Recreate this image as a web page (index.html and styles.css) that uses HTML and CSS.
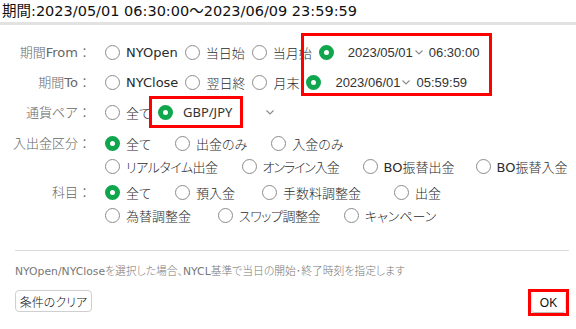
FILE: index.html
```html
<!DOCTYPE html>
<html lang="ja">

<head>
    <meta charset="UTF-8">
    <meta name="viewport" content="width=device-width, initial-scale=1.0">
    <title>検索条件</title>
    <link rel="stylesheet" href="styles.css">
</head>

<body>
    <div class="header">期間:2023/05/01 06:30:00～2023/06/09 23:59:59</div>

    <div class="form">
        <!-- 期間 -->
        <div class="row">
            <div class="label">期間From：</div>
            <div class="opts">
                <div class="line">
                    <span class="opt"><span class="radio"></span>NYOpen</span>
                    <span class="opt"><span class="radio"></span>当日始</span>
                    <span class="opt"><span class="radio"></span>当月始</span>
                    <span class="opt">
                        <span class="radio on wide"></span>
                        <span class="date">2023/05/01<svg class="chev" width="8" height="5" viewBox="0 0 8 5"><path d="M0.5 0.5 L4 4 L7.5 0.5" fill="none" stroke="#8a8a8a" stroke-width="1.1"/></svg></span>
                        <span class="time">06:30:00</span>
                    </span>
                </div>
            </div>
        </div>

        <div class="row">
            <div class="label">期間To：</div>
            <div class="opts">
                <div class="line">
                    <span class="opt"><span class="radio"></span>NYClose</span>
                    <span class="opt"><span class="radio"></span>翌日終</span>
                    <span class="opt"><span class="radio"></span>月末</span>
                    <span class="opt">
                        <span class="radio on wide"></span>
                        <span class="date">2023/06/01<svg class="chev" width="8" height="5" viewBox="0 0 8 5"><path d="M0.5 0.5 L4 4 L7.5 0.5" fill="none" stroke="#8a8a8a" stroke-width="1.1"/></svg></span>
                        <span class="time">05:59:59</span>
                    </span>
                </div>
            </div>
        </div>

        <!-- 通貨ペア -->
        <div class="row">
            <div class="label">通貨ペア：</div>
            <div class="opts">
                <div class="line">
                    <span class="opt"><span class="radio"></span>全て</span>
                    <span class="opt">
                        <span class="radio on pair"></span>
                        <span class="select">GBP/JPY<svg class="chev" width="8" height="5" viewBox="0 0 8 5"><path d="M0.5 0.5 L4 4 L7.5 0.5" fill="none" stroke="#8a8a8a" stroke-width="1.1"/></svg></span>
                    </span>
                </div>
            </div>
        </div>

        <!-- 入出金区分 -->
        <div class="row multi first">
            <div class="label">入出金区分：</div>
            <div class="opts">
                <div class="line">
                    <span class="opt"><span class="radio on"></span>全て</span>
                    <span class="opt"><span class="radio"></span>出金のみ</span>
                    <span class="opt"><span class="radio"></span>入金のみ</span>
                </div>
                <div class="line">
                    <span class="opt tight"><span class="radio"></span>リアルタイム出金</span>
                    <span class="opt tighter"><span class="radio"></span>オンライン入金</span>
                    <span class="opt narrow"><span class="radio"></span>BO振替出金</span>
                    <span class="opt"><span class="radio"></span>BO振替入金</span>
                </div>
            </div>
        </div>

        <!-- 科目 -->
        <div class="row multi">
            <div class="label">科目：</div>
            <div class="opts">
                <div class="line">
                    <span class="opt"><span class="radio on"></span>全て</span>
                    <span class="opt spaced"><span class="radio"></span>預入金</span>
                    <span class="opt spaced-more"><span class="radio"></span>手数料調整金</span>
                    <span class="opt"><span class="radio"></span>出金</span>
                </div>
                <div class="line">
                    <span class="opt spaced"><span class="radio"></span>為替調整金</span>
                    <span class="opt tight"><span class="radio"></span>スワップ調整金</span>
                    <span class="opt"><span class="radio"></span>キャンペーン</span>
                </div>
            </div>
        </div>

        <!-- 注目枠 -->
        <div class="mark mark-date"></div>
        <div class="mark mark-pair"></div>
    </div>

    <div class="footer">
        <div class="note">NYOpen/NYCloseを選択した場合、NYCL基準で当日の開始･終了時刻を指定します</div>
        <div class="actions">
            <button class="btn btn-clear">条件のクリア</button>
            <span class="mark-ok"><button class="btn btn-ok">OK</button></span>
        </div>
    </div>
</body>

</html>
```

FILE: styles.css
```css
body {
    margin: 0;
    font-family: 'DejaVu Sans', 'Noto Sans CJK JP Light', 'Noto Sans CJK JP', sans-serif;
    font-size: 13px;
    font-feature-settings: "palt";
    color: #2b2b2b;
    background: #fff;
}

.header {
    height: 22px;
    line-height: 22px;
    padding-left: 2px;
    font-family: 'DejaVu Sans', 'Noto Sans CJK JP', sans-serif;
    font-size: 14.5px;
    color: #111;
    border-bottom: 3px solid #e2e2e2;
    white-space: nowrap;
}

/* フォーム */
.form {
    position: relative;
    padding-top: 12px;
}

.row {
    display: flex;
    padding: 3.5px 0;
}

.row.multi {
    padding: 3px 0 0;
}

.row.multi.first {
    padding-top: 4.5px;
}

.label {
    flex: none;
    width: 91px;
    text-align: right;
    line-height: 23px;
    color: #666;
    white-space: nowrap;
    font-feature-settings: normal;
}

.opts {
    margin-left: 14px;
    display: flex;
    flex-direction: column;
}

.line {
    display: flex;
    align-items: center;
    height: 23px;
    white-space: nowrap;
}

.opt {
    display: flex;
    align-items: center;
    margin-right: 7px;
}

.multi .opt {
    margin-right: 24px;
}

.multi .opt.narrow {
    margin-right: 21px;
}

.multi .opt.spaced {
    margin-right: 27px;
}

.multi .opt.spaced-more {
    margin-right: 33px;
}

.opt.tight {
    letter-spacing: -0.5px;
}

.opt.tighter {
    letter-spacing: -1.1px;
}

.radio {
    flex: none;
    box-sizing: border-box;
    width: 15px;
    height: 15px;
    border: 1px solid #8c8c8c;
    border-radius: 50%;
    margin-right: 6px;
    background: #fff;
}

.radio.on {
    border: 5px solid #0fa64e;
}

.radio.wide {
    margin-right: 14px;
}

.radio.pair {
    margin-right: 10px;
}

.date,
.time {
    font-family: 'Liberation Sans', sans-serif;
    color: #333;
}

.date {
    display: flex;
    align-items: center;
}

.date .chev {
    margin-left: 2px;
    margin-right: 6px;
}

.select {
    display: flex;
    align-items: center;
    justify-content: space-between;
    width: 91px;
    font-family: 'Noto Sans', sans-serif;
    color: #333;
}

/* 注目枠 */
.mark {
    position: absolute;
    box-sizing: border-box;
    border: 3px solid #f00;
}

.mark-date {
    left: 301px;
    top: 8px;
    width: 191px;
    height: 63px;
}

.mark-pair {
    left: 149px;
    top: 71px;
    width: 94px;
    height: 32px;
}

/* フッター */
.footer {
    margin: 23.5px 7px 0 15px;
    border-top: 1px solid #dcdcdc;
}

.note {
    margin-top: 12px;
    line-height: 18px;
    font-size: 10.8px;
    color: #777;
    white-space: nowrap;
}

.actions {
    display: flex;
    justify-content: space-between;
    align-items: flex-start;
    margin-top: 8px;
}

.btn {
    font-family: 'DejaVu Sans', 'Noto Sans CJK JP Light', 'Noto Sans CJK JP', sans-serif;
    font-feature-settings: "palt";
    font-size: 12px;
    color: #111;
    background: #fff;
    border: 1px solid #cfcfcf;
    border-radius: 4px;
    padding: 0;
    cursor: pointer;
}

.btn-clear {
    margin-top: 1px;
    width: 77px;
    height: 22px;
}

.mark-ok {
    display: block;
    box-sizing: border-box;
    width: 41px;
    height: 27px;
    border: 3px solid #f00;
}

.btn-ok {
    display: block;
    width: 35px;
    height: 21px;
    border-color: #fff #e6e6e6 #bdbdbd;
    font-family: 'Liberation Sans', sans-serif;
    font-size: 12px;
}
```
